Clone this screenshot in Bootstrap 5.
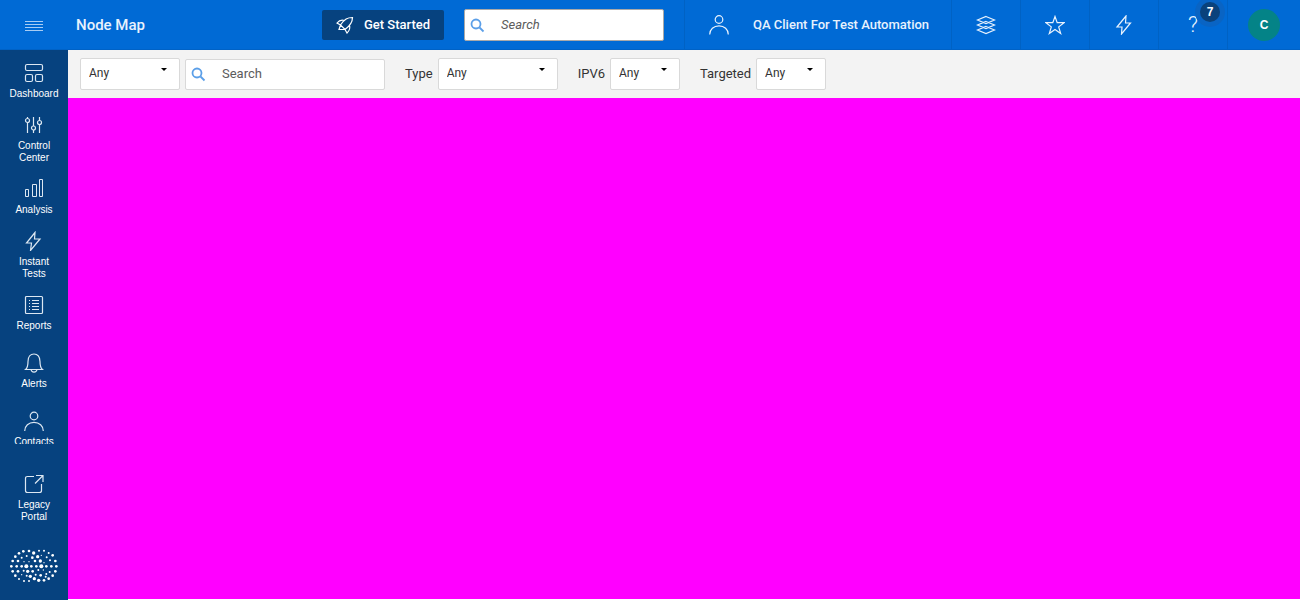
<!DOCTYPE html>
<html lang="en">
<head>
<meta charset="utf-8">
<meta name="viewport" content="width=device-width, initial-scale=1">
<title>Node Map</title>
<link href="https://cdn.jsdelivr.net/npm/bootstrap@5.3.0/dist/css/bootstrap.min.css" rel="stylesheet">
<style>
  body { font-family: "Liberation Sans", Arial, sans-serif; font-size: 13px; line-height: 16px; color: #333; }
  svg { display: block; fill: none; stroke: currentColor; stroke-width: 1.2; }
  .topbar { height: 50px; background: #006ad5; color: #e8f2fd; box-shadow: inset 0 -1px #0062c6; }
  .menu-btn { width: 68px; color: #a8cdf4; }
  .page-title { font-family: Roboto, sans-serif; font-size: 15px; font-weight: 500; line-height: 20px; }
  .topbar .strong-text { font-family: Roboto, sans-serif; font-size: 13px; font-weight: 500; }
  .start-btn { width: 122px; height: 30px; background: #06427f; color: #fff; border-radius: 2px; gap: 10px; }
  .search-box { width: 200px; height: 31px; background: #fff; border: 1px solid #d9d9d9; border-radius: 2px; }
  .topbar .search-box { height: 32px; border-color: #a9a9a9; margin: 0 20px; }
  .search-box svg { stroke: #5b9fe8; stroke-width: 1.8; margin: 0 16px 0 5px; }
  .search-box input { font-family: Roboto, sans-serif; font-size: 13px; color: #333; outline: 0; }
  .search-box input::placeholder { color: #5c5c5c; opacity: 1; }
  .topbar .search-box input::placeholder { font-style: italic; }
  .cell { border-left: 1px solid #0062c4; color: #e8f2fd; }
  .tool-cell { width: 69px; }
  .user-cell { width: 267px; }
  .avatar-cell { width: 73px; }
  .avatar { width: 32px; height: 32px; background: #048387; color: #fff; font-size: 12px; }
  .count { top: 2px; right: 7px; width: 20px; height: 20px; background: #0a427c; box-shadow: 0 0 0 5px #0964c4; color: #fff; font-size: 12px; }
  .question { font-family: Roboto, sans-serif; font-weight: 300; font-size: 22px; line-height: 24px; }
  .rail { width: 68px; background: #06427f; }
  .rail-list { height: 394px; overflow: hidden; padding-top: 13px; }
  .rail-item { color: #fff; font-size: 10px; line-height: 12px; gap: 5px; padding-bottom: 15px; }
  .rail-item.roomy { padding-bottom: 21px; }
  .rail-item svg { stroke: #dce7f2; }
  .rail .logo-dots { fill: #fff; stroke: none; margin-bottom: 12px; }
  .filters { height: 48px; background: #f3f3f3; padding: 0 12px; }
  .filters .search-box { margin-left: 5px; }
  .filters label { margin: 0 5px 0 20px; font-family: Roboto, sans-serif; }
  .pick { height: 32px; width: 70px; border: 1px solid #d9d9d9; border-radius: 2px; padding: 0 8px 3px; color: #333; appearance: none; font-family: Roboto, sans-serif; font-size: 12px;
    background: #fff url("data:image/svg+xml,%3Csvg xmlns='http://www.w3.org/2000/svg' viewBox='0 0 6 3'%3E%3Cpath d='M0 0h6L3 3z'/%3E%3C/svg%3E") no-repeat right 12px top 9px / 6px 3px; }
  .pick-100 { width: 100px; }
  .pick-120 { width: 120px; }
  .map-area { background: #f0f; margin-bottom: 1px; }
</style>
</head>
<body class="d-flex flex-column vh-100 overflow-hidden">
<header class="topbar d-flex align-items-center flex-shrink-0">
  <button class="menu-btn btn p-0 d-flex justify-content-center border-0" type="button" aria-label="Menu">
    <svg width="18" height="12" viewBox="0 0 18 12"><path stroke-width="1" d="M0 2.500h18M0 5.500h18M0 8.500h18M0 11.500h18"/></svg>
  </button>
  <h1 class="page-title mb-0 ms-2">Node Map</h1>
  <button class="start-btn strong-text btn border-0 p-0 ms-auto d-flex align-items-center justify-content-center" type="button">
    <svg width="18" height="18" viewBox="0 0 18 18"><path d="M16.500 1.500C11.500 1.500 8.500 3 4.500 9L9 13.500C14.500 9.500 16.500 6.500 16.500 1.500zM8.500 4.500C5.500 3.500 3 4.500 1 7L4.500 9M13.500 9.500C14.500 12.500 13.500 14.500 11 17L9 13.500M4.500 9 3 13.500 9 13.500"/></svg>
    Get Started
  </button>
  <div class="search-box d-flex align-items-center px-0">
    <svg width="15" height="15" viewBox="0 0 15 15" class="flex-shrink-0"><circle cx="6" cy="6" r="4.500"/><path d="m9.500 9.500 4 4"/></svg>
    <input class="border-0 p-0 w-100 bg-transparent" type="search" placeholder="Search" aria-label="Search the portal">
  </div>
  <a href="#" class="cell user-cell h-100 d-flex align-items-center text-decoration-none">
    <svg width="20" height="20" viewBox="0 0 20 20" class="ms-4 me-4"><circle cx="10" cy="4.500" r="3.800"/><path d="M.7 19.500c0-5 4-8.700 9.300-8.700s9.300 3.700 9.300 8.700"/></svg>
    <span class="strong-text">QA Client For Test Automation</span>
  </a>
  <button class="cell tool-cell btn rounded-0 border-top-0 border-end-0 border-bottom-0 p-0 h-100 d-flex align-items-center justify-content-center" type="button" aria-label="Layers">
    <svg width="20" height="20" viewBox="0 0 20 20"><path d="M10 1.500 18.500 5 10 8.500 1.500 5zM10 6.500 18.500 10 10 13.500 1.500 10zM10 11.500 18.500 15 10 18.500 1.500 15z"/></svg>
  </button>
  <button class="cell tool-cell btn rounded-0 border-top-0 border-end-0 border-bottom-0 p-0 h-100 d-flex align-items-center justify-content-center" type="button" aria-label="Favourites">
    <svg width="20" height="20" viewBox="0 0 20 20"><path d="m10 1.500 2.200 6.200h6.800l-5.300 4.200 2 6.600L10 14.600l-5.700 3.900 2-6.600L1 7.700h6.800z"/></svg>
  </button>
  <button class="cell tool-cell btn rounded-0 border-top-0 border-end-0 border-bottom-0 p-0 h-100 d-flex align-items-center justify-content-center" type="button" aria-label="Instant test">
    <svg width="20" height="20" viewBox="0 0 20 20"><path d="M12 1 3 12h5L7.500 19l9-11h-5z"/></svg>
  </button>
  <button class="cell tool-cell btn rounded-0 border-top-0 border-end-0 border-bottom-0 p-0 h-100 d-flex align-items-center justify-content-center position-relative" type="button" aria-label="Help">
    <span class="question">?</span>
    <span class="count position-absolute rounded-circle fw-bold d-flex align-items-center justify-content-center">7</span>
  </button>
  <a href="#" class="cell avatar-cell h-100 d-flex align-items-center justify-content-center text-decoration-none"><span class="avatar rounded-circle fw-bold d-flex align-items-center justify-content-center">C</span></a>
</header>
<div class="d-flex flex-grow-1 overflow-hidden">
  <nav class="rail flex-shrink-0 d-flex flex-column align-items-stretch" aria-label="Main">
    <div class="rail-list flex-shrink-0">
      <a href="#" class="rail-item d-flex flex-column align-items-center text-center text-decoration-none">
        <svg width="20" height="20" viewBox="0 0 20 20"><rect x="1.500" y="1.500" width="17" height="6" rx="1.500"/><rect x="1.500" y="11.500" width="7" height="7" rx="1.500"/><rect x="11.500" y="11.500" width="7" height="7" rx="1.500"/></svg>Dashboard</a>
      <a href="#" class="rail-item d-flex flex-column align-items-center text-center text-decoration-none">
        <svg width="20" height="20" viewBox="0 0 20 20"><path d="M3.500 2v1.500m0 4V18M9.500 2v9m0 4v3M15.500 2v3.500m0 4V18"/><circle cx="3.500" cy="5.500" r="2"/><circle cx="9.500" cy="13" r="2"/><circle cx="15.500" cy="7.500" r="2"/></svg>Control<br>Center</a>
      <a href="#" class="rail-item d-flex flex-column align-items-center text-center text-decoration-none">
        <svg width="20" height="20" viewBox="0 0 20 20"><path stroke-width="1" d="M1.500 10.500h3v7h-3zM8.500 5.500h4v12h-4zM15.500.5h3v17h-3z"/></svg>Analysis</a>
      <a href="#" class="rail-item d-flex flex-column align-items-center text-center text-decoration-none">
        <svg width="20" height="20" viewBox="0 0 20 20"><path d="M11 1.500 2.500 12h5L6.500 19.500 16 8h-5.500z"/></svg>Instant<br>Tests</a>
      <a href="#" class="rail-item roomy d-flex flex-column align-items-center text-center text-decoration-none">
        <svg width="20" height="20" viewBox="0 0 20 20"><rect x="1.500" y="1.500" width="17" height="17" rx="1"/><path stroke-width="1" d="M5 5.500h1m2 0h7M5 8.500h1m2 0h7M5 11.500h1m2 0h7M5 14.500h1m2 0h7"/></svg>Reports</a>
      <a href="#" class="rail-item roomy d-flex flex-column align-items-center text-center text-decoration-none">
        <svg width="20" height="20" viewBox="0 0 20 20"><path d="M1.500 16.500h17c-2-1.500-2.500-3-2.500-8C16 3.500 13.500 1 10 1S4 3.500 4 8.500c0 5-.5 6.500-2.500 8zM7 16.500c.5 3.500 5.500 3.500 6 0"/></svg>Alerts</a>
      <a href="#" class="rail-item d-flex flex-column align-items-center text-center text-decoration-none">
        <svg width="20" height="20" viewBox="0 0 20 20"><circle cx="10" cy="5" r="3.800"/><path d="M.7 20c0-5 4-8.700 9.300-8.700s9.300 3.700 9.300 8.700"/></svg>Contacts</a>
    </div>
    <a href="#" class="rail-item roomy d-flex flex-column align-items-center text-center text-decoration-none mt-auto">
      <svg width="20" height="20" viewBox="0 0 20 20"><path d="M10 2.500H3.500q-2 0-2 2v12q0 2 2 2h12q2 0 2-2V10M12 1.500h7v6.500M19 1.500l-8 8"/></svg>Legacy<br>Portal</a>
    <svg class="logo-dots mx-auto flex-shrink-0" width="60" height="44" viewBox="0 0 180 132" aria-hidden="true">
      <g id="dots"></g>
    </svg>
  </nav>
  <main class="flex-grow-1 d-flex flex-column">
    <form class="filters d-flex align-items-center flex-shrink-0">
      <select class="pick pick-100" aria-label="Node filter"><option>Any</option></select>
      <div class="search-box d-flex align-items-center">
        <svg width="15" height="15" viewBox="0 0 15 15" class="flex-shrink-0"><circle cx="6" cy="6" r="4.500"/><path d="m9.500 9.500 4 4"/></svg>
        <input class="border-0 p-0 w-100 bg-transparent" type="search" placeholder="Search" aria-label="Search nodes">
      </div>
      <label for="type">Type</label><select id="type" class="pick pick-120"><option>Any</option></select>
      <label for="ipv6">IPV6</label><select id="ipv6" class="pick"><option>Any</option></select>
      <label for="targeted">Targeted</label><select id="targeted" class="pick"><option>Any</option></select>
    </form>
    <div class="map-area flex-grow-1"></div>
  </main>
</div>
<script src="https://cdn.jsdelivr.net/npm/bootstrap@5.3.0/dist/js/bootstrap.bundle.min.js"></script>
<script>
  // Each logo dot: x, y, radius
  const dots = [
    [58,22,4],[75,21,4],[45,28,4],[89,27,5],[105,20,3],[120,20,3],[134,27,3],
    [34,38,4],[53,41,3],[68,36,3],[85,41,4],[101,38,5],[112,34,2],[128,40,3],[146,34,4],
    [26,51,4],[42,51,4],[60,53,2],[75,53,2],[93,51,4],[109,51,5],[120,56,2],[138,49,3],[154,51,4],
    [22,67,4],[38,67,4],[53,67,4],[67,67,6],[82,67,4],[97,67,4],[112,67,6],[127,67,4],[142,67,4],[157,67,4],
    [26,82,4],[42,82,4],[59,80,3],[71,82,5],[86,82,4],[103,78,3],[118,78,2],[137,84,3],[154,82,4],
    [34,95,4],[53,92,2],[68,95,3],[79,97,5],[95,92,3],[110,94,4],[127,90,3],[146,95,4],
    [45,105,3],[91,104,5],[125,98,3],[134,104,4],[60,111,3],[75,111,3],[104,109,5],[120,109,4]
  ];
  document.getElementById('dots').innerHTML = dots.map(([x, y, r]) => `<circle cx="${x}" cy="${y}" r="${r}"/>`).join('');
</script>
</body>
</html>
